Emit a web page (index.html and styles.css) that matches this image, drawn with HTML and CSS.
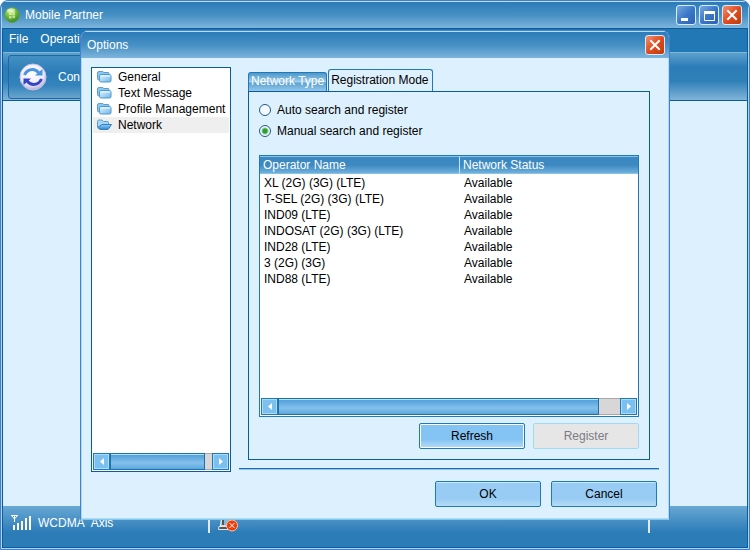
FILE: index.html
```html
<!DOCTYPE html>
<html lang="en">
<head>
<meta charset="utf-8">
<title>Mobile Partner</title>
<link rel="stylesheet" href="styles.css">
</head>
<body>
<svg class="defs" aria-hidden="true">
  <defs>
    <linearGradient id="folder-fill" x1="0" y1="0" x2="1" y2="1">
      <stop offset="0" stop-color="#e4f6ff"/><stop offset="1" stop-color="#6cb4e8"/>
    </linearGradient>
    <linearGradient id="open-fill" x1="0" y1="0" x2="0" y2="1">
      <stop offset="0" stop-color="#8fd0fa"/><stop offset="1" stop-color="#2f86d0"/>
    </linearGradient>
    <symbol id="folder" viewBox="0 0 15 12">
      <path d="M.5 2Q.5.5 2 .5h3.500l1.500 1H11q1 0 1 1v6.500H2Q.5 9 .5 7.500z" fill="#8cc8f0" stroke="#5c9ccc"/>
      <path d="M2.500 5q0-1.500 1.500-1.500h8.500q1.500 0 1.500 1.500v4.500q0 1.500-1.500 1.500H4Q2.500 11 2.500 9.500z" fill="url(#folder-fill)" stroke="#5098d0"/>
      <path d="M3.500 5h10" stroke="#f0faff"/>
    </symbol>
    <symbol id="folder-open" viewBox="0 0 15 12">
      <path d="M.5 8V2.500Q.5 1 2 1h3l1.500 1.500h4q1 0 1 1V6z" fill="#a4d8f8" stroke="#5c9ccc"/>
      <path d="M.8 8.500 5 5.500h9.500L11.500 10q-.5.500-1.500.500H4q-2 0-3.200-2z" fill="url(#open-fill)" stroke="#3880bc" stroke-linejoin="round"/>
    </symbol>
    <symbol id="cross" viewBox="0 0 12 12">
      <path d="m2 2 8 8m0-8-8 8" stroke="#fff" stroke-width="2" stroke-linecap="square"/>
    </symbol>
  </defs>
</svg>

<main class="window">
  <header class="titlebar">
    <svg class="app-icon" viewBox="0 0 16 16" aria-hidden="true">
      <defs>
        <radialGradient id="ball" cx=".4" cy=".25" r=".8">
          <stop offset="0" stop-color="#d2f29a"/><stop offset=".5" stop-color="#6cb83a"/><stop offset="1" stop-color="#34802a"/>
        </radialGradient>
      </defs>
      <circle cx="8" cy="8" r="7.500" fill="url(#ball)" stroke="#5c9c5c"/>
      <path d="M5 6h3v2H5zM8.500 5H11v3H8.500zM5 9h2.500v2.500H5zM8.500 8.500H11V11H8.500z" fill="#e8f4a4" opacity=".7"/>
      <ellipse cx="7" cy="3.500" rx="4" ry="2" fill="#fff" opacity=".5"/>
    </svg>
    <h1 class="title">Mobile Partner</h1>
    <div class="caption-buttons">
      <button class="caption" type="button" aria-label="Minimize"><svg viewBox="0 0 18 18"><path d="M4 12h7v3H4z" fill="#fff"/></svg></button>
      <button class="caption" type="button" aria-label="Maximize"><svg viewBox="0 0 18 18"><path d="M4.500 6v8.500h10V6" fill="none" stroke="#fff"/><path d="M4 5h11v3H4z" fill="#fff"/></svg></button>
      <button class="caption close" type="button" aria-label="Close"><svg class="cross"><use href="#cross"/></svg></button>
    </div>
  </header>
  <nav class="menubar">
    <a class="menu" href="#file">File</a>
    <a class="menu" href="#operation">Operation</a>
  </nav>
  <div class="toolbar">
    <button class="connect" type="button">
      <svg class="connect-icon" viewBox="0 0 28 28" aria-hidden="true">
        <defs>
          <radialGradient id="disc" cx=".45" cy=".35" r=".65">
            <stop offset="0" stop-color="#fff"/><stop offset=".7" stop-color="#eeeafa"/><stop offset="1" stop-color="#b4aed8"/>
          </radialGradient>
        </defs>
        <circle cx="14" cy="14" r="13" fill="url(#disc)" stroke="#c4c4e4"/>
        <path d="M5.500 12Q8 6.500 13.500 6.500q3.500 0 6.500 3.500" fill="none" stroke="#4a94e0" stroke-width="3"/>
        <path d="M16 12.500h7.500V6z" fill="#4a94e0"/>
        <path d="M22.500 16q-2.500 5.500-8 5.500-3.500 0-6.500-3.500" fill="none" stroke="#3446c4" stroke-width="3"/>
        <path d="M12 15.500H4.500V22z" fill="#3446c4"/>
      </svg>
      <span>Connection</span>
    </button>
  </div>
  <div class="workspace"></div>
  <footer class="statusbar">
    <svg class="signal" viewBox="0 0 20 16" aria-hidden="true">
      <path d="M0 .5h7M1 1l2.500 3L6 1M3.500 1v6" fill="none" stroke="#fff"/>
      <path d="M2 10h2v5H2zM6 8h2v7H6zM10 6h2v9h-2zM14 3h2v12h-2zM18 1h2v14h-2z" fill="#fff"/>
    </svg>
    <span class="network">WCDMA&nbsp; Axis</span>
    <span class="device">
      <svg class="device-icon" viewBox="0 0 20 14" aria-hidden="true">
        <path d="M3.500 0h9v8h-10z" fill="#88b8d8" stroke="#fff"/>
        <path d="M4 1h2v6H4z" fill="#555"/>
        <path d="M1 8.500h12v3H.5z" fill="#555" stroke="#e4e4e4"/>
        <circle cx="14" cy="7.500" r="5.500" fill="#f03c0c" stroke="#ffc0a0"/>
        <path d="m11.500 5 5 5m0-5-5 5" stroke="#fff"/>
      </svg>
    </span>
  </footer>
</main>

<section class="dialog" role="dialog" aria-label="Options">
  <header class="dialog-title">
    <h2 class="title">Options</h2>
    <button class="caption close" type="button" aria-label="Close options"><svg class="cross"><use href="#cross"/></svg></button>
  </header>
  <div class="dialog-body">
    <nav class="tree">
      <ul class="tree-list">
        <li><a class="node" href="#general"><svg class="folder"><use href="#folder"/></svg>General</a></li>
        <li><a class="node" href="#text"><svg class="folder"><use href="#folder"/></svg>Text Message</a></li>
        <li><a class="node" href="#profile"><svg class="folder"><use href="#folder"/></svg>Profile Management</a></li>
        <li><a class="node selected" href="#network"><svg class="folder"><use href="#folder-open"/></svg>Network</a></li>
      </ul>
      <div class="scrollbar">
        <button class="arrow" type="button" aria-label="Scroll tree left"><svg viewBox="0 0 4 7"><path d="M4 0v7L0 3.500z" fill="#fff"/></svg></button>
        <div class="thumb"></div>
        <div class="track"></div>
        <button class="arrow" type="button" aria-label="Scroll tree right"><svg viewBox="0 0 4 7"><path d="M0 0v7l4-3.500z" fill="#fff"/></svg></button>
      </div>
    </nav>
    <div class="pane">
      <div class="tabs" role="tablist">
        <button class="tab" type="button" role="tab" aria-selected="false">Network Type</button>
        <button class="tab active" type="button" role="tab" aria-selected="true">Registration Mode</button>
      </div>
      <div class="panel">
        <label class="choice"><input type="radio" name="mode">Auto search and register</label>
        <label class="choice"><input type="radio" name="mode" checked>Manual search and register</label>
        <div class="list">
          <table class="operators">
            <thead><tr><th class="name">Operator Name</th><th>Network Status</th></tr></thead>
            <tbody>
              <tr><td>XL (2G) (3G) (LTE)</td><td>Available</td></tr>
              <tr><td>T-SEL (2G) (3G) (LTE)</td><td>Available</td></tr>
              <tr><td>IND09 (LTE)</td><td>Available</td></tr>
              <tr><td>INDOSAT (2G) (3G) (LTE)</td><td>Available</td></tr>
              <tr><td>IND28 (LTE)</td><td>Available</td></tr>
              <tr><td>3 (2G) (3G)</td><td>Available</td></tr>
              <tr><td>IND88 (LTE)</td><td>Available</td></tr>
            </tbody>
          </table>
          <div class="scrollbar wide">
            <button class="arrow" type="button" aria-label="Scroll list left"><svg viewBox="0 0 4 7"><path d="M4 0v7L0 3.500z" fill="#fff"/></svg></button>
            <div class="thumb"></div>
            <div class="track"></div>
            <button class="arrow" type="button" aria-label="Scroll list right"><svg viewBox="0 0 4 7"><path d="M0 0v7l4-3.500z" fill="#fff"/></svg></button>
          </div>
        </div>
        <div class="panel-actions">
          <button class="push default" type="button">Refresh</button>
          <button class="push" type="button" disabled>Register</button>
        </div>
      </div>
      <hr class="rule">
      <div class="dialog-actions">
        <button class="push" type="button">OK</button>
        <button class="push" type="button">Cancel</button>
      </div>
    </div>
  </div>
</section>
</body>
</html>
```
FILE: styles.css
```css
* { box-sizing: border-box; }

body {
  margin: 0;
  height: 100vh;
  position: relative;
  overflow: hidden;
  background: #fff;
  font: 12px/16px "Liberation Sans", Arial, sans-serif;
  color: #000;
}

button { font: inherit; margin: 0; padding: 0; }
a { color: inherit; text-decoration: none; }
svg { display: block; flex: none; }
.defs { position: absolute; width: 0; height: 0; }

/* Main window */
.window {
  display: flex;
  flex-direction: column;
  height: 100%;
  border: 1px solid #4a7cc8;
  border-radius: 8px 8px 0 0;
  box-shadow: inset 0 0 0 1px #a4d8f4, inset 0 0 0 2px #0c5c9c;
  background: #2178b4;
  overflow: hidden;
}
.titlebar {
  display: flex;
  align-items: center;
  gap: 5px;
  height: 28px;
  margin: 0 1px;
  padding: 0 6px 0 2px;
  border-top: 1px solid #b4e0f8;
  border-bottom: 1px solid #0c5c9c;
  background: linear-gradient(#2c7cb8, #4690c4 50%, #7cb4dc);
}
.app-icon { width: 16px; height: 16px; }
.title {
  flex: 1;
  margin: 0;
  font-size: 12px;
  font-weight: normal;
  color: #fff;
}
.caption-buttons { display: flex; gap: 3px; }
.caption {
  width: 20px;
  height: 20px;
  border: 1px solid #d4ecfc;
  border-radius: 3px;
  background: linear-gradient(135deg, #78a8e0, #3c78c8 50%, #2c60b4);
}
.caption.close { background: linear-gradient(135deg, #f49070, #e04c20 50%, #c03808); }
.caption svg { width: 18px; height: 18px; }
.caption .cross { width: 12px; height: 12px; margin: auto; }

.menubar {
  display: flex;
  gap: 12px;
  height: 23px;
  padding: 2px 8px;
  color: #fff;
}
.toolbar {
  height: 49px;
  margin: 0 2px;
  padding: 2px 5px;
  border-top: 1px solid #80b8dc;
  border-bottom: 1px solid #0c5c9c;
  background: linear-gradient(#5ca0cc, #2c7cb8 30%, #3080b8 60%, #80b4d8);
}
.connect {
  display: flex;
  align-items: center;
  gap: 11px;
  width: 140px;
  height: 44px;
  padding-left: 10px;
  border: 1px solid #2068a4;
  border-radius: 3px;
  background: linear-gradient(#4490c4, #2c7cb8 40%, #3484bc 70%, #68a4cc);
  color: #fff;
}
.connect-icon { width: 28px; height: 28px; }
.workspace { flex: 1; margin: 0 2px; background: #dcf0fe; }
.statusbar {
  display: flex;
  height: 42px;
  margin: 0 2px 1px;
  padding: 9px 97px 0 8px;
  border-bottom: 1px solid #0c5c9c;
  background: linear-gradient(#68a8d4, #2c7cb8 65%);
  color: #fff;
}
.signal { width: 20px; height: 16px; }
.network { width: 177px; padding-left: 7px; }
.device {
  flex: 1;
  height: 18px;
  padding: 3px 0 0 8px;
  border: solid #e4e8f0;
  border-width: 0 2px;
}
.device-icon { width: 20px; height: 14px; }

/* Options dialog, floating above the main window */
.dialog {
  position: absolute;
  inset: 30px 80px 30px 80px;
  display: flex;
  flex-direction: column;
  border: 1px solid #4480d0;
  border-bottom-color: #88c8ec;
  border-radius: 8px 8px 0 0;
  background: #dcf0fe;
  box-shadow: inset 0 0 0 1px #a8dcf4;
  overflow: hidden;
}
.dialog-title {
  display: flex;
  align-items: center;
  height: 27px;
  padding: 0 4px 0 6px;
  border-top: 1px solid #b4e0f8;
  background: linear-gradient(#2c7cb8, #4690c4 50%, #7cb4dc);
}
.dialog-body { flex: 1; display: flex; gap: 8px; min-height: 0; padding: 9px 10px 12px; }

.tree {
  display: flex;
  flex-direction: column;
  width: 140px;
  margin-bottom: 35px;
  border: 1px solid #0c5c9c;
  background: #fff;
}
.tree-list { flex: 1; margin: 0; padding: 1px; list-style: none; }
.node { display: flex; align-items: center; gap: 6px; height: 16px; padding-left: 4px; white-space: nowrap; }
.node.selected { background: #efefef; }
.folder { width: 15px; height: 12px; }

.scrollbar { display: flex; height: 17px; margin: 0 1px 1px; }
.arrow {
  display: flex;
  align-items: center;
  justify-content: center;
  width: 17px;
  border: 1px solid #2078b4;
  background: #7cc0f0;
  box-shadow: inset 0 0 0 1px #a8dcfc;
}
.arrow svg { width: 4px; height: 7px; }
.thumb {
  flex: 1;
  border: 1px solid #1c70ac;
  box-shadow: inset 0 1px #b4e4fc;
  background: linear-gradient(#4c9cd8, #84c0ec 60%, #5ca8dc);
}
.track { width: 7px; border: solid #a8a8a8; border-width: 1px 0; background: #d8d6d6; }
.wide .track { width: 21px; }

.pane { flex: 1; display: flex; flex-direction: column; min-width: 0; }
.tabs { display: flex; align-items: flex-end; gap: 1px; height: 24px; padding-left: 9px; }
.tab {
  height: 19px;
  padding: 0 2px;
  border: 1px solid #2078b4;
  border-bottom: 0;
  border-radius: 3px 3px 0 0;
  background: linear-gradient(#4c98cc, #84bce0 35%, #a8d4f0 50%, #5ca0d0 55%, #94c8ec);
  line-height: 14px;
  color: #fff;
}
.tab:not(.active) { padding-bottom: 3px; }
.tab.active { height: 22px; padding: 0 3px 1px 2px; background: #dcf0fe; color: #000; }
.panel {
  flex: 1;
  display: flex;
  flex-direction: column;
  margin: 0 9px;
  padding: 7px 10px 10px;
  border: 1px solid #0c5c9c;
}
.choice { display: flex; align-items: center; gap: 6px; height: 21px; }
.choice input {
  appearance: none;
  width: 12px;
  height: 12px;
  margin: 0;
  border: 1px solid #1c5c90;
  border-radius: 50%;
  background: #f4faff;
}
.choice input:checked { background: radial-gradient(circle, #2ca02c 2px, #f4faff 4px); }

.list {
  flex: 1;
  display: flex;
  flex-direction: column;
  justify-content: space-between;
  margin-top: 14px;
  border: 1px solid #2078b4;
  background: #fff;
}
.operators { width: 100%; border-collapse: separate; border-spacing: 0; table-layout: fixed; }
.operators th {
  height: 18px;
  padding: 0 3px;
  border-top: 1px solid #88c4e8;
  border-bottom: 1px solid #88c4e8;
  background: linear-gradient(#3c88c0 50%, #70b0dc);
  color: #fff;
  font-weight: normal;
  text-align: left;
}
.operators .name { width: 200px; border-right: 1px solid #c4e8fc; }
.operators td { height: 16px; padding: 0 4px; }
.operators tbody tr:first-child td { height: 17px; padding-top: 1px; }

.panel-actions { display: flex; justify-content: flex-end; gap: 8px; margin-top: 6px; }
.dialog-actions { display: flex; justify-content: flex-end; gap: 10px; padding-right: 2px; }
.push {
  width: 106px;
  height: 26px;
  border: 1px solid #2078b4;
  border-radius: 2px;
  background: linear-gradient(#98ccf4 70%, #b4dcf4);
  box-shadow: inset 0 1px #c4ecfc;
}
.push.default {
  background: linear-gradient(#84c4f4 65%, #b4dcf8);
  box-shadow: inset 0 0 0 1px #fff;
}
.push:disabled { border-color: #a4d8f8; background: #e6e6e6; box-shadow: none; color: #7c7c84; }
.rule {
  width: 100%;
  height: 2px;
  margin: 8px 0 11px;
  border: 0;
  border-top: 1px solid #1c70b0;
  border-bottom: 1px solid #8cc4ec;
}
```
